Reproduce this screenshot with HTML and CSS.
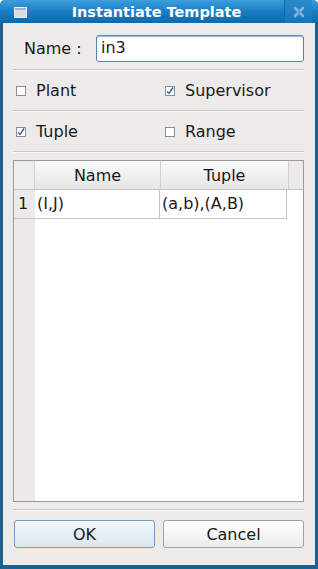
FILE: index.html
```html
<html>
  <head>
    <title>Instantiate Template</title>
    <link rel="stylesheet" href="styles.css">
  </head>
  <body>
    <div id="window">
      <div id="titlebar">
        <div class="winicon"><div class="winicon-top"></div></div>
        <div class="title">Instantiate Template</div>
        <div class="closebtn">
          <svg width="12" height="12" viewBox="0 0 12 12">
            <path d="M2 2 L10 10 M10 2 L2 10" stroke="#7fb8e0" stroke-width="2.6" stroke-linecap="round"/>
            <circle cx="6" cy="6" r="1.6" fill="#4f9fd6"/>
          </svg>
        </div>
      </div>
      <div id="content">
        <div class="namerow">
          <span class="label">Name :</span>
          <div class="input">in3</div>
        </div>
        <div class="sep"></div>
        <div class="checkrow">
          <div class="check"><span class="box"></span>Plant</div>
          <div class="check"><span class="box"><svg width="8" height="8" viewBox="0 0 8 8"><path d="M1 4.5 L3 6.5 L7 0.5" fill="none" stroke="#2a62aa" stroke-width="1.4"/></svg></span>Supervisor</div>
        </div>
        <div class="sep"></div>
        <div class="checkrow">
          <div class="check"><span class="box"><svg width="8" height="8" viewBox="0 0 8 8"><path d="M1 4.5 L3 6.5 L7 0.5" fill="none" stroke="#2a62aa" stroke-width="1.4"/></svg></span>Tuple</div>
          <div class="check"><span class="box"></span>Range</div>
        </div>
        <div class="sep"></div>
        <div class="table">
          <div class="thead">
            <div class="corner"></div>
            <div class="th c1">Name</div>
            <div class="th c2">Tuple</div>
            <div class="filler"></div>
          </div>
          <div class="tbody">
            <div class="vhead">
              <div class="rownum">1</div>
            </div>
            <div class="cells">
              <div class="tr">
                <div class="td c1">(I,J)</div>
                <div class="td c2">(a,b),(A,B)</div>
              </div>
            </div>
          </div>
        </div>
        <div class="sep sep-bottom"></div>
        <div class="buttons">
          <div class="btn ok">OK</div>
          <div class="btn">Cancel</div>
        </div>
      </div>
    </div>
  </body>
</html>
```

FILE: styles.css
```css
body {
  margin: 0;
  font-family: "DejaVu Sans", sans-serif;
  font-size: 16px;
  color: #1a1a1a;
}
#window {
  width: 318px;
  height: 569px;
  box-sizing: border-box;
  background-color: #1b6291;
  padding: 0 3px 4px 3px;
  display: flex;
  flex-direction: column;
  border-radius: 5px 5px 0 0;
}
#titlebar {
  height: 23px;
  margin: 0 -3px;
  padding-left: 14px;
  display: flex;
  align-items: center;
  background: linear-gradient(#3f9fdc, #1a7dc4 50%, #0e69ad);
  border-radius: 5px 5px 0 0;
}
.winicon {
  width: 13px;
  height: 11px;
  border: 1px solid #e8eef4;
  background-color: #dcdcdc;
  box-sizing: border-box;
  margin-top: 1px;
}
.winicon-top {
  height: 2px;
  background-color: #9fb4c8;
}
.title {
  flex: 1;
  text-align: center;
  color: white;
  font-weight: bold;
  font-size: 14.5px;
  padding-left: 2px;
}
.closebtn {
  width: 28px;
  height: 23px;
  margin-right: 6px;
  display: flex;
  align-items: center;
  justify-content: center;
  background: linear-gradient(#2a8ad0, #1874b8);
  border-left: 1px solid #1468a8;
  box-sizing: border-box;
}
#content {
  flex: 1;
  background-color: #edebe9;
  padding: 0 11px 0 10px;
  display: flex;
  flex-direction: column;
}
.namerow {
  margin-top: 12px;
  height: 27px;
  display: flex;
  align-items: center;
}
.label {
  width: 72px;
  padding-left: 11px;
}
.input {
  flex: 1;
  height: 27px;
  box-sizing: border-box;
  border: 1px solid #5a86ad;
  border-radius: 3px;
  background-color: white;
  padding: 2px 0 0 4px;
  box-shadow: inset 0 1px 1px #9ab6cc;
}
.sep {
  height: 1px;
  background-color: #c9c7c5;
  border-bottom: 1px solid #f8f8f8;
  margin-top: 7px;
}
.checkrow {
  height: 39px;
  display: flex;
  align-items: center;
}
.check {
  flex-shrink: 0;
  width: 146px;
  display: flex;
  align-items: center;
  padding-left: 3px;
}
.box {
  width: 10px;
  height: 10px;
  box-sizing: border-box;
  border: 1px solid #8e8e8e;
  background-color: white;
  margin-right: 10px;
  display: flex;
}
.checkrow + .sep {
  margin-top: 0;
}
.table {
  margin-top: 7px;
  height: 342px;
  box-sizing: border-box;
  border: 1px solid #9c9a98;
  background-color: white;
  display: flex;
  flex-direction: column;
}
.thead {
  height: 28px;
  display: flex;
  border-bottom: 1px solid #c4c4c4;
  background: linear-gradient(#fafafa, #e6e6e6);
}
.corner {
  width: 20px;
  background-color: #eeeeee;
  border-right: 1px solid #d0d0d0;
}
.th {
  display: flex;
  align-items: center;
  justify-content: center;
  border-right: 1px solid #d0d0d0;
}
.c1 {
  width: 125px;
}
.c2 {
  width: 127px;
}
.filler {
  flex: 1;
  background-color: #eceae8;
}
.tbody {
  flex: 1;
  display: flex;
}
.vhead {
  width: 21px;
  background-color: #eceae8;
}
.rownum {
  height: 29px;
  box-sizing: border-box;
  padding: 4px 0 0 4px;
  border-bottom: 1px solid #c4c4c4;
}
.cells {
  flex: 1;
}
.tr {
  display: flex;
  height: 29px;
}
.td {
  box-sizing: border-box;
  padding: 4px 0 0 2px;
  border-right: 1px solid #c4c4c4;
  border-bottom: 1px solid #c4c4c4;
  white-space: nowrap;
}
.sep-bottom {
  margin-top: 7px;
}
.buttons {
  margin-top: 9px;
  display: flex;
  gap: 8px;
  padding-left: 1px;
}
.btn {
  flex: 1;
  height: 28px;
  box-sizing: border-box;
  border: 1px solid #a3a3a3;
  border-radius: 3px;
  background: linear-gradient(#ffffff, #ebebeb);
  display: flex;
  align-items: center;
  justify-content: center;
}
.btn.ok {
  border-color: #6d9dc6;
  background: linear-gradient(#f3f7fa, #dae6f0);
}
```
